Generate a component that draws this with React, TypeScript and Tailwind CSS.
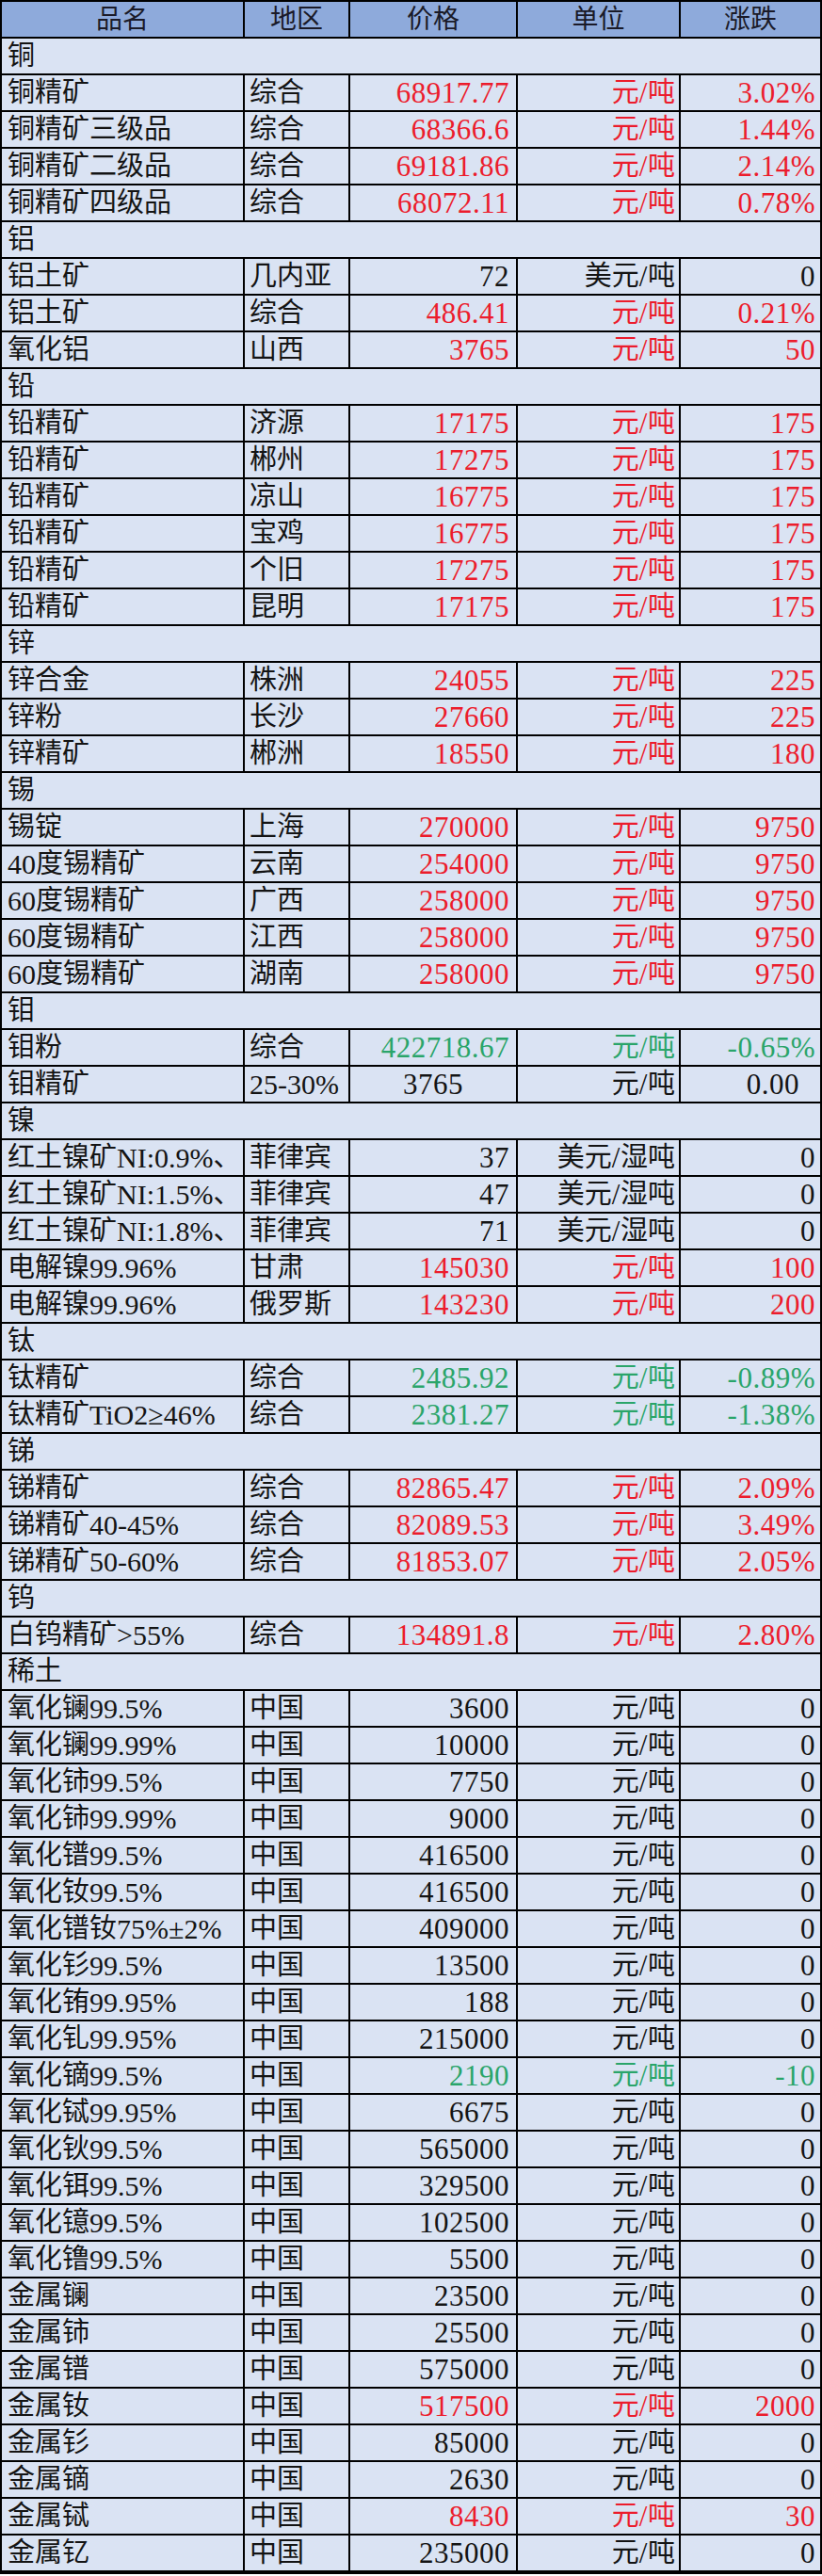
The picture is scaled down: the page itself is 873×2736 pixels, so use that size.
import React from "react";

type Color = "r" | "g" | "k";
type DataRow = {
  n: string;
  r: string;
  p: string;
  u: string;
  c: string;
  col: Color;
  special?: boolean;
};
type Row = { s: string } | DataRow;

const R = (n: string, r: string, p: string, u: string, c: string, col: Color, special?: boolean): DataRow => ({ n, r, p, u, c, col, special });

const rows: Row[] = [
  { s: "铜" },
  R("铜精矿", "综合", "68917.77", "元/吨", "3.02%", "r"),
  R("铜精矿三级品", "综合", "68366.6", "元/吨", "1.44%", "r"),
  R("铜精矿二级品", "综合", "69181.86", "元/吨", "2.14%", "r"),
  R("铜精矿四级品", "综合", "68072.11", "元/吨", "0.78%", "r"),
  { s: "铝" },
  R("铝土矿", "几内亚", "72", "美元/吨", "0", "k"),
  R("铝土矿", "综合", "486.41", "元/吨", "0.21%", "r"),
  R("氧化铝", "山西", "3765", "元/吨", "50", "r"),
  { s: "铅" },
  R("铅精矿", "济源", "17175", "元/吨", "175", "r"),
  R("铅精矿", "郴州", "17275", "元/吨", "175", "r"),
  R("铅精矿", "凉山", "16775", "元/吨", "175", "r"),
  R("铅精矿", "宝鸡", "16775", "元/吨", "175", "r"),
  R("铅精矿", "个旧", "17275", "元/吨", "175", "r"),
  R("铅精矿", "昆明", "17175", "元/吨", "175", "r"),
  { s: "锌" },
  R("锌合金", "株洲", "24055", "元/吨", "225", "r"),
  R("锌粉", "长沙", "27660", "元/吨", "225", "r"),
  R("锌精矿", "郴洲", "18550", "元/吨", "180", "r"),
  { s: "锡" },
  R("锡锭", "上海", "270000", "元/吨", "9750", "r"),
  R("40度锡精矿", "云南", "254000", "元/吨", "9750", "r"),
  R("60度锡精矿", "广西", "258000", "元/吨", "9750", "r"),
  R("60度锡精矿", "江西", "258000", "元/吨", "9750", "r"),
  R("60度锡精矿", "湖南", "258000", "元/吨", "9750", "r"),
  { s: "钼" },
  R("钼粉", "综合", "422718.67", "元/吨", "-0.65%", "g"),
  R("钼精矿", "25-30%", "3765", "元/吨", "0.00", "k", true),
  { s: "镍" },
  R("红土镍矿NI:0.9%、", "菲律宾", "37", "美元/湿吨", "0", "k"),
  R("红土镍矿NI:1.5%、", "菲律宾", "47", "美元/湿吨", "0", "k"),
  R("红土镍矿NI:1.8%、", "菲律宾", "71", "美元/湿吨", "0", "k"),
  R("电解镍99.96%", "甘肃", "145030", "元/吨", "100", "r"),
  R("电解镍99.96%", "俄罗斯", "143230", "元/吨", "200", "r"),
  { s: "钛" },
  R("钛精矿", "综合", "2485.92", "元/吨", "-0.89%", "g"),
  R("钛精矿TiO2≥46%", "综合", "2381.27", "元/吨", "-1.38%", "g"),
  { s: "锑" },
  R("锑精矿", "综合", "82865.47", "元/吨", "2.09%", "r"),
  R("锑精矿40-45%", "综合", "82089.53", "元/吨", "3.49%", "r"),
  R("锑精矿50-60%", "综合", "81853.07", "元/吨", "2.05%", "r"),
  { s: "钨" },
  R("白钨精矿>55%", "综合", "134891.8", "元/吨", "2.80%", "r"),
  { s: "稀土" },
  R("氧化镧99.5%", "中国", "3600", "元/吨", "0", "k"),
  R("氧化镧99.99%", "中国", "10000", "元/吨", "0", "k"),
  R("氧化铈99.5%", "中国", "7750", "元/吨", "0", "k"),
  R("氧化铈99.99%", "中国", "9000", "元/吨", "0", "k"),
  R("氧化镨99.5%", "中国", "416500", "元/吨", "0", "k"),
  R("氧化钕99.5%", "中国", "416500", "元/吨", "0", "k"),
  R("氧化镨钕75%±2%", "中国", "409000", "元/吨", "0", "k"),
  R("氧化钐99.5%", "中国", "13500", "元/吨", "0", "k"),
  R("氧化铕99.95%", "中国", "188", "元/吨", "0", "k"),
  R("氧化钆99.95%", "中国", "215000", "元/吨", "0", "k"),
  R("氧化镝99.5%", "中国", "2190", "元/吨", "-10", "g"),
  R("氧化铽99.95%", "中国", "6675", "元/吨", "0", "k"),
  R("氧化钬99.5%", "中国", "565000", "元/吨", "0", "k"),
  R("氧化铒99.5%", "中国", "329500", "元/吨", "0", "k"),
  R("氧化镱99.5%", "中国", "102500", "元/吨", "0", "k"),
  R("氧化镥99.5%", "中国", "5500", "元/吨", "0", "k"),
  R("金属镧", "中国", "23500", "元/吨", "0", "k"),
  R("金属铈", "中国", "25500", "元/吨", "0", "k"),
  R("金属镨", "中国", "575000", "元/吨", "0", "k"),
  R("金属钕", "中国", "517500", "元/吨", "2000", "r"),
  R("金属钐", "中国", "85000", "元/吨", "0", "k"),
  R("金属镝", "中国", "2630", "元/吨", "0", "k"),
  R("金属铽", "中国", "8430", "元/吨", "30", "r"),
  R("金属钇", "中国", "235000", "元/吨", "0", "k"),
];

const colorClass = (c: Color) =>
  c === "r" ? "text-[#ec1c2c]" : c === "g" ? "text-[#2aa56a]" : "text-[#141414]";

const RUN = /[\u3000-\u9fff\uff00-\uffef]+|[^\u3000-\u9fff\uff00-\uffef]+/g;
const CJK = /[\u3000-\u9fff\uff00-\uffef]/;

function T({ text, tight }: { text: string; tight?: boolean }) {
  const parts = text.match(RUN) || [];
  return (
    <>
      {parts.map((p, i) =>
        CJK.test(p) ? (
          <span key={i}>{p}</span>
        ) : (
          <span key={i} className={tight ? "text-[30px]" : "text-[31px] tracking-[0.5px]"}>
            {p}
          </span>
        )
      )}
    </>
  );
}

export default function App() {
  return (
    <div className="w-[873px] bg-white">
      <div className="w-[873px] bg-[#dae3f3] border-x-2 border-t-2 border-b-2 border-black font-['Liberation_Serif','Noto_Sans_CJK_SC',serif] text-[29px] leading-none text-[#141414] whitespace-nowrap">
        <div className="h-[39px] flex border-b-2 border-black bg-[#8eaadb] text-[#1a1a28] text-[28px]">
          <div className="w-[258px] border-r-2 border-black flex items-center justify-center">品名</div>
          <div className="w-[112px] border-r-2 border-black flex items-center justify-center">地区</div>
          <div className="w-[178px] border-r-2 border-black flex items-center justify-center">价格</div>
          <div className="w-[173px] border-r-2 border-black flex items-center justify-center">单位</div>
          <div className="flex-1 flex items-center justify-center">涨跌</div>
        </div>
        {rows.map((row, i) => {
          if ("s" in row) {
            return (
              <div key={i} className="h-[39px] flex items-center border-b-2 border-black pl-[6px]">
                {row.s}
              </div>
            );
          }
          const cc = colorClass(row.col);
          return (
            <div key={i} className="h-[39px] flex border-b-2 border-black">
              <div className="w-[258px] border-r-2 border-black flex items-center pl-[6px]">
                <T text={row.n} tight />
              </div>
              <div className="w-[112px] border-r-2 border-black flex items-center pl-[5px]">
                <T text={row.r} tight />
              </div>
              <div
                className={
                  row.special
                    ? `w-[178px] border-r-2 border-black flex items-center justify-center ${cc}`
                    : `w-[178px] border-r-2 border-black flex items-center justify-end pr-[7px] ${cc}`
                }
              >
                <T text={row.p} />
              </div>
              <div className={`w-[173px] border-r-2 border-black flex items-center justify-end pr-[4px] ${cc}`}>
                <T text={row.u} />
              </div>
              <div
                className={
                  row.special
                    ? `flex-1 flex items-center justify-end pr-[22px] ${cc}`
                    : `flex-1 flex items-center justify-end pr-[5px] ${cc}`
                }
              >
                <T text={row.c} />
              </div>
            </div>
          );
        })}
      </div>
    </div>
  );
}
